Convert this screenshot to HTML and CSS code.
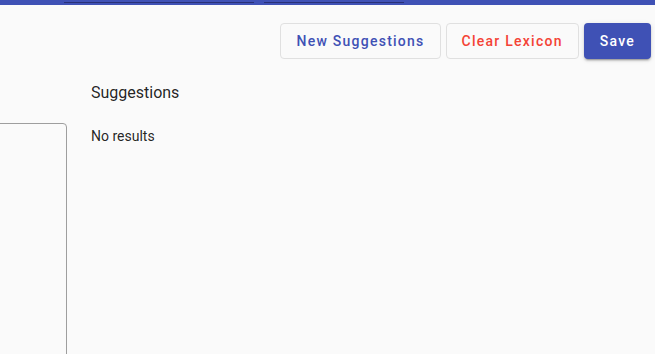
FILE: index.html
```html
<!DOCTYPE html>
<html>
<head>
<meta charset="utf-8">
<link rel="stylesheet" href="styles.css">
</head>
<body>
<div class="topbar">
  <div class="tab-line line-a"></div>
  <div class="tab-line line-b"></div>
</div>
<div class="actions">
  <button class="btn btn-stroked btn-primary">New Suggestions</button>
  <button class="btn btn-stroked btn-warn">Clear Lexicon</button>
  <button class="btn btn-raised">Save</button>
</div>
<div class="content">
  <div class="left-col">
    <div class="editor-box"></div>
  </div>
  <div class="suggestions">
    <h2 class="sugg-title">Suggestions</h2>
    <p class="sugg-empty">No results</p>
  </div>
</div>
</body>
</html>
```

FILE: styles.css
```css
html, body {
  margin: 0;
  padding: 0;
  height: 100%;
  overflow: hidden;
}
body {
  background: #fafafa;
  font-family: Roboto, "Liberation Sans", sans-serif;
  color: rgba(0, 0, 0, 0.87);
}
.topbar {
  height: 5px;
  background: #3f51b5;
  display: flex;
  padding-left: 64px;
  gap: 10px;
  align-items: flex-start;
}
.tab-line {
  margin-top: 2px;
  height: 1px;
  background: #283078;
}
.line-a { width: 190px; }
.line-b { width: 140px; }
.actions {
  display: flex;
  justify-content: flex-end;
  gap: 5px;
  padding: 18px 4px 0 0;
}
.btn {
  height: 36px;
  box-sizing: border-box;
  border-radius: 4px;
  font-family: Roboto, "Liberation Sans", sans-serif;
  font-size: 14px;
  font-weight: 500;
  letter-spacing: 1.25px;
  padding: 0 15px;
  background: transparent;
  cursor: pointer;
}
.btn-stroked {
  border: 1px solid #e0e0e0;
}
.btn-primary { color: #3f51b5; }
.btn-warn { color: #f44336; }
.btn-raised {
  border: none;
  background: #3f51b5;
  color: #fff;
  padding: 0 16px;
  box-shadow: 0 3px 1px -2px rgba(0,0,0,.2), 0 2px 2px 0 rgba(0,0,0,.14), 0 1px 5px 0 rgba(0,0,0,.12);
}
.content {
  display: flex;
  gap: 24px;
}
.left-col {
  width: 67px;
  flex: none;
  padding-top: 64px;
}
.editor-box {
  margin-left: -10px;
  height: 240px;
  border: 1px solid #9e9e9e;
  border-radius: 4px;
}
.suggestions {
  padding-top: 24px;
}
.sugg-title {
  margin: 0;
  font-size: 16px;
  font-weight: 400;
  line-height: 20px;
}
.sugg-empty {
  margin: 23px 0 0;
  font-size: 14px;
  line-height: 20px;
}
```
